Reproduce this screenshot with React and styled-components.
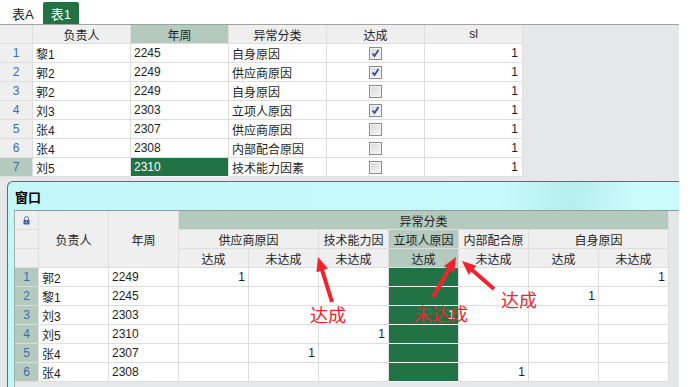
import React from 'react';
import styled, { createGlobalStyle } from 'styled-components';

const GlobalStyle = createGlobalStyle`
  html, body { margin: 0; padding: 0; background: #fff; }
  body {
    font-family: "Liberation Sans", "Noto Sans CJK SC", sans-serif;
    font-size: 12px;
    color: #1e1e1e;
  }
`;

const GREEN = '#217346';
const PICKED = '#b4cabe';
const RED = '#f2232f';

const Page = styled.div`
  position: relative;
  width: 691px;
  height: 387px;
  overflow: hidden;
  background: #fff;
  display: flex;
  flex-direction: column;
`;

const TabBar = styled.div`
  display: flex;
  align-items: flex-end;
  gap: 1px;
  height: 24px;
  padding-left: 4px;
`;

const Tab = styled.div`
  height: 22px;
  padding: 0 8px;
  display: flex;
  align-items: center;
  font-size: 13px;
  border-radius: 2px 2px 0 0;
  background: ${p => (p.$active ? GREEN : 'transparent')};
  color: ${p => (p.$active ? '#fff' : '#222')};
`;

const Workspace = styled.div`
  flex: 1;
  width: 679px;
  border-top: 1px solid #a3a3a3;
  background: #e6e7e9;
  display: flex;
  flex-direction: column;
  min-height: 0;
`;

const Grid = styled.div`
  display: grid;
  grid-template-columns: ${p => p.$cols};
  grid-auto-rows: 18px;
  gap: 1px;
  width: max-content;
  padding: 0 1px 1px 0;
  background: #dedede;
`;

const Cell = styled.div`
  grid-column: span ${p => p.$span || 1};
  grid-row: span ${p => p.$rows || 1};
  display: flex;
  align-items: center;
  justify-content: ${p => (p.$align === 'right' ? 'flex-end' : p.$align === 'center' ? 'center' : 'flex-start')};
  padding: 0 ${p => (p.$align === 'right' ? '3px' : '0')} 0 ${p => (p.$align === 'left' ? '3px' : '0')};
  white-space: nowrap;
  overflow: hidden;
  background: ${p => p.$bg || '#fff'};
  color: ${p => p.$color || '#1e1e1e'};
  box-shadow: ${p => (p.$bg === GREEN ? '0 1px 0 #fff' : 'none')};
`;

const RowNo = styled(Cell)`
  justify-content: center;
  color: #3b6db2;
`;

const Box = styled.span`
  width: 13px;
  height: 13px;
  box-sizing: border-box;
  border: 1px solid #8c8c8c;
  background: linear-gradient(135deg, #d8d8d8, #f7f7f7);
  box-shadow: inset 0 0 0 1px #f4f4f4;
  display: flex;
`;

const Check = ({ on }) => (
  <Box>
    {on && (
      <svg width="11" height="11" viewBox="0 0 11 11">
        <path d="M2.5 5.5 L4.5 8 L8.5 2" fill="none" stroke="#2f4fa5" strokeWidth="1.8" />
      </svg>
    )}
  </Box>
);

const Window = styled.div`
  flex: 1;
  margin: 4px 0 0 7px;
  border-top: 1px solid #5f6d6d;
  border-left: 1px solid #5f6d6d;
  border-radius: 6px 0 0 0;
  background: linear-gradient(100deg, #c3f7f7 0%, #c7fafa 70%, #b6eded 80%, #cdfdfd 90%, #c6f9f9 100%);
  display: flex;
  flex-direction: column;
`;

const TitleBar = styled.div`
  height: 28px;
  padding-left: 7px;
  display: flex;
  align-items: center;
  font-family: "Noto Sans CJK SC", sans-serif;
  font-size: 13px;
  font-weight: 700;
  color: #000;
`;

const Frame = styled.div`
  flex: 1;
  padding-left: 6px;
  display: flex;
`;

const Client = styled.div`
  flex: 1;
  border-top: 1px solid #8d9c9c;
  border-left: 1px solid #a4b0b0;
  background: #e6e7e9;
`;

const Notes = styled.div`
  position: absolute;
  inset: 0;
  pointer-events: none;
`;

const Note = styled.span`
  position: absolute;
  left: ${p => p.$x}px;
  top: ${p => p.$y}px;
  font-family: "Noto Sans CJK SC", sans-serif;
  font-size: 18px;
  line-height: 18px;
  color: ${RED};
`;

const Lock = () => (
  <svg width="7" height="9" viewBox="0 0 7 9">
    <path d="M1.5 4 V2.5 a2 2 0 0 1 4 0 V4" fill="none" stroke="#5a78c0" strokeWidth="1" />
    <rect x="0.5" y="4" width="6" height="4.5" fill="#3e63b8" />
    <rect x="3" y="5.5" width="1" height="1.5" fill="#cfdcf5" />
  </svg>
);

const Arrow = ({ from, to }) => {
  const [x1, y1] = from;
  const [x2, y2] = to;
  const len = Math.hypot(x2 - x1, y2 - y1);
  const ux = (x2 - x1) / len;
  const uy = (y2 - y1) / len;
  const bx = x2 - ux * 14;
  const by = y2 - uy * 14;
  const nx = -uy * 6;
  const ny = ux * 6;
  return (
    <g fill={RED} stroke={RED}>
      <line x1={x1} y1={y1} x2={bx + ux * 2} y2={by + uy * 2} strokeWidth="4" />
      <polygon points={`${x2},${y2} ${bx + nx},${by + ny} ${bx - nx},${by - ny}`} stroke="none" />
    </g>
  );
};

const topRows = [
  ['黎1', '2245', '自身原因', true],
  ['郭2', '2249', '供应商原因', true],
  ['郭2', '2249', '自身原因', false],
  ['刘3', '2303', '立项人原因', true],
  ['张4', '2307', '供应商原因', false],
  ['张4', '2308', '内部配合原因', false],
  ['刘5', '2310', '技术能力因素', false],
];

// metric columns: 供应商达成, 供应商未达成, 技术未达成, 立项达成, 内部未达成, 自身达成, 自身未达成
const bottomRows = [
  ['郭2', '2249', [0, 6]],
  ['黎1', '2245', [5]],
  ['刘3', '2303', [3]],
  ['刘5', '2310', [2]],
  ['张4', '2307', [1]],
  ['张4', '2308', [4]],
];

const HEAD = '#efefef';

export default function App() {
  return (
    <Page>
      <GlobalStyle />
      <TabBar>
        <Tab>表A</Tab>
        <Tab $active>表1</Tab>
      </TabBar>
      <Workspace>
        <Grid $cols="32px repeat(5, 97px)">
          <Cell $bg={HEAD} />
          <Cell $bg={HEAD} $align="center">负责人</Cell>
          <Cell $bg={PICKED} $align="center">年周</Cell>
          <Cell $bg={HEAD} $align="center">异常分类</Cell>
          <Cell $bg={HEAD} $align="center">达成</Cell>
          <Cell $bg={HEAD} $align="center">sl</Cell>
          {topRows.map(([who, week, kind, done], i) => {
            const last = i === topRows.length - 1;
            return (
              <React.Fragment key={i}>
                <RowNo $bg={last ? PICKED : HEAD}>{i + 1}</RowNo>
                <Cell $align="left">{who}</Cell>
                <Cell $align="left" $bg={last ? GREEN : undefined} $color={last ? '#fff' : undefined}>{week}</Cell>
                <Cell $align="left">{kind}</Cell>
                <Cell $align="center"><Check on={done} /></Cell>
                <Cell $align="right" style={{ paddingRight: 4 }}>1</Cell>
              </React.Fragment>
            );
          })}
        </Grid>

        <Window>
          <TitleBar>窗口</TitleBar>
          <Frame>
            <Client>
              <Grid $cols="23px repeat(9, 69px)">
                <Cell $bg={HEAD} $align="center"><Lock /></Cell>
                <Cell $bg={HEAD} $align="center" $rows={3}>负责人</Cell>
                <Cell $bg={HEAD} $align="center" $rows={3}>年周</Cell>
                <Cell $bg={PICKED} $align="center" $span={7}>异常分类</Cell>

                <Cell $bg={HEAD} />
                <Cell $bg={HEAD} $align="center" $span={2}>供应商原因</Cell>
                <Cell $bg={HEAD} $align="center">技术能力因</Cell>
                <Cell $bg={PICKED} $align="center">立项人原因</Cell>
                <Cell $bg={HEAD} $align="center">内部配合原</Cell>
                <Cell $bg={HEAD} $align="center" $span={2}>自身原因</Cell>

                <Cell $bg={HEAD} />
                {['达成', '未达成', '未达成', '达成', '未达成', '达成', '未达成'].map((t, i) => (
                  <Cell key={i} $bg={i === 3 ? PICKED : HEAD} $align="center">{t}</Cell>
                ))}

                {bottomRows.map(([who, week, hits], r) => (
                  <React.Fragment key={r}>
                    <RowNo $bg={PICKED}>{r + 1}</RowNo>
                    <Cell $align="left">{who}</Cell>
                    <Cell $align="left">{week}</Cell>
                    {[0, 1, 2, 3, 4, 5, 6].map(m => (
                      <Cell
                        key={m}
                        $align="right"
                        $bg={m === 3 ? GREEN : undefined}
                        $color={m === 3 ? '#fff' : undefined}
                      >
                        {hits.includes(m) ? '1' : ''}
                      </Cell>
                    ))}
                  </React.Fragment>
                ))}
              </Grid>
            </Client>
          </Frame>
        </Window>
      </Workspace>

      <Notes>
        <svg width="691" height="387">
          <Arrow from={[332, 302]} to={[318, 257]} />
          <Arrow from={[433, 297]} to={[456, 257]} />
          <Arrow from={[494, 289]} to={[462, 261]} />
        </svg>
        <Note $x={310} $y={305}>达成</Note>
        <Note $x={414} $y={304}>未达成</Note>
        <Note $x={501} $y={290}>达成</Note>
      </Notes>
    </Page>
  );
}
